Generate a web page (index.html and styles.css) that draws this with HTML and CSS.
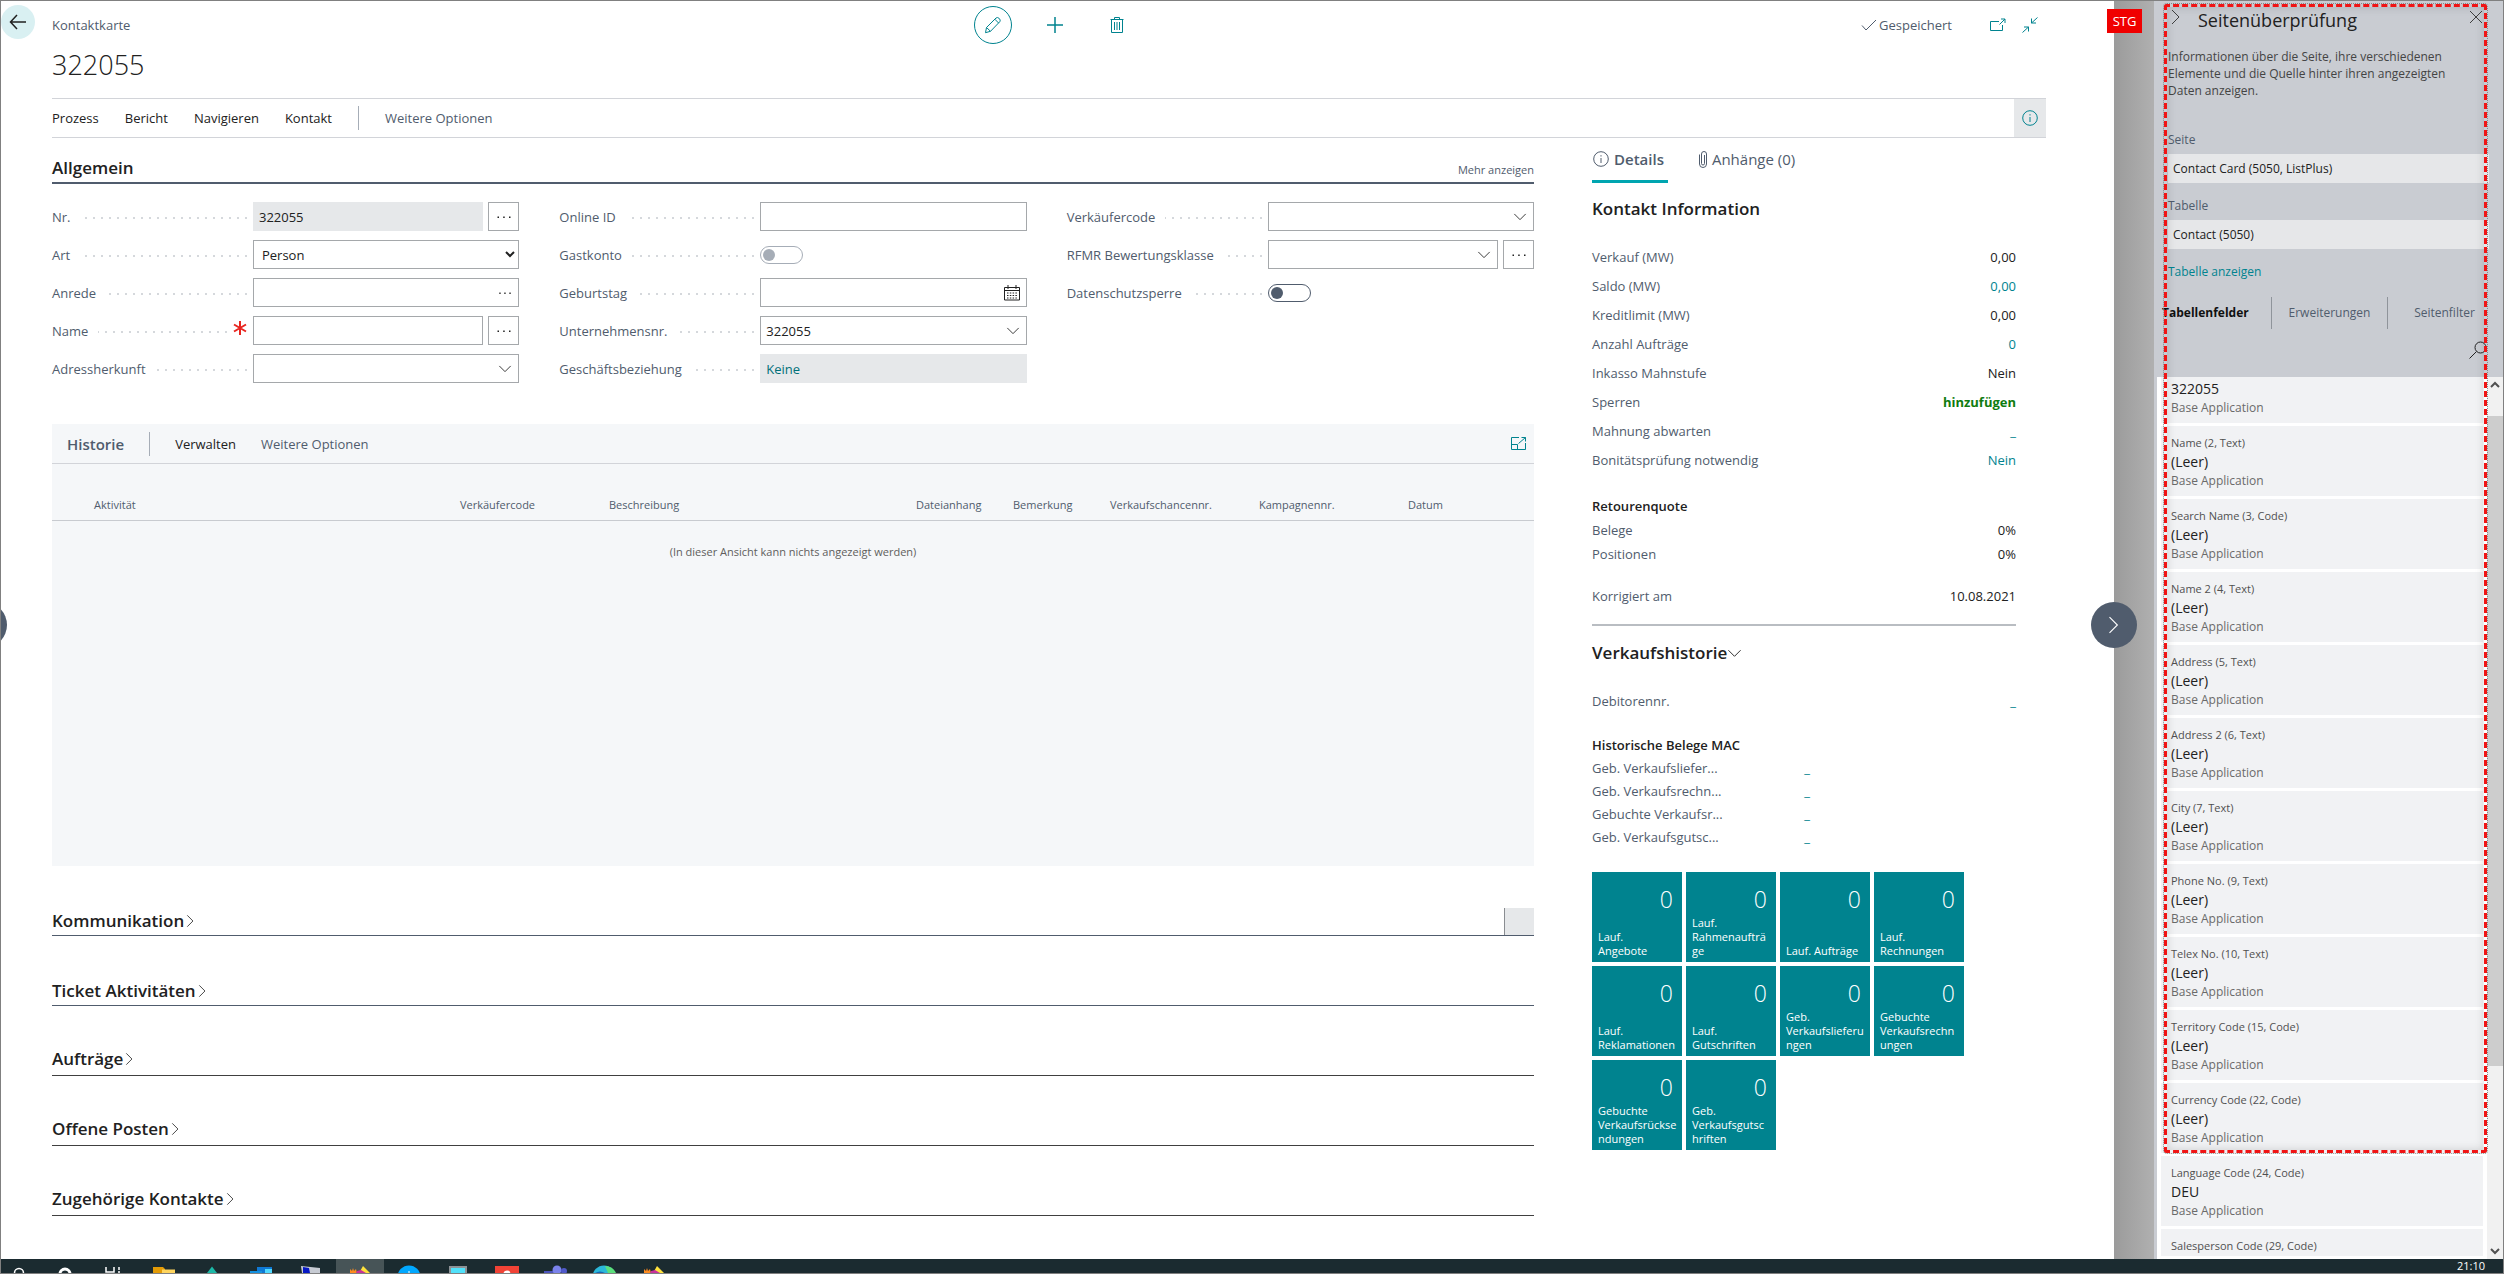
FILE: index.html
```html
<!DOCTYPE html>
<html lang="de">
<head>
  <meta charset="UTF-8" />
  <meta name="viewport" content="width=device-width, initial-scale=1.0"/>
  <title>Kontaktkarte - 322055</title>
  <link rel="stylesheet" href="styles.css">
</head>
<body>
  <svg class="sprite" aria-hidden="true">
    <symbol id="i-down" viewBox="0 0 16 16"><path d="M1.500 4.500 8 11l6.500-6.500"/></symbol>
    <symbol id="i-right" viewBox="0 0 16 16"><path d="M4 1l7 7-7 7"/></symbol>
    <symbol id="i-dots" viewBox="0 0 16 16"><path d="M1.500 7.500h1.500v1.500H1.500zM7.200 7.500h1.500v1.500H7.200zM13 7.500h1.500v1.500H13z" fill="currentColor" stroke="none"/></symbol>
    <symbol id="i-info" viewBox="0 0 16 16"><circle cx="8" cy="8" r="7.300"/><path d="M8 7v5M8 4.200v1.300"/></symbol>
  </svg>

  <div class="workspace">
    <div class="rail">
      <button class="back" aria-label="Zurück">
        <svg width="18" height="18" viewBox="0 0 18 18"><path d="M17 9H1.500M8 2 1.500 9 8 16" stroke-width="1.500"/></svg>
      </button>
      <button class="nav-circle nav-prev" aria-label="Vorheriger"></button>
    </div>

    <main class="page">
      <header class="topbar">
        <span class="caption">Kontaktkarte</span>
        <div class="tools">
          <button class="tool round" aria-label="Bearbeiten">
            <svg width="18" height="18" viewBox="0 0 18 18"><path d="M2.500 11.500 12 2q1.500-1.200 3.300.5 1.600 1.700.5 3.200L6.500 15.300 1.500 16.700zM10.800 3.200l3.900 3.900M2.500 11.500l4 3.800"/></svg>
          </button>
          <button class="tool" aria-label="Neu">
            <svg width="16" height="16" viewBox="0 0 16 16"><path d="M8 0v16M0 8h16" stroke-width="1.500"/></svg>
          </button>
          <button class="tool" aria-label="Löschen">
            <svg width="14" height="16" viewBox="0 0 14 16"><path d="M.5 2.500h13M4.500 2.500v-2h5v2M1.500 2.500v13h11v-13M4.500 5v8M7 5v8M9.500 5v8"/></svg>
          </button>
        </div>
        <div class="status">
          <svg width="16" height="12" viewBox="0 0 16 12"><path d="M1 6.500 5 11 15 1"/></svg>
          <span>Gespeichert</span>
          <button class="link-icon" aria-label="In neuem Fenster öffnen">
            <svg width="16" height="14" viewBox="0 0 16 14"><path d="M9 3.500H.5v9h12V7M9.500 6.500 15 1M11 1h4v4"/></svg>
          </button>
          <button class="link-icon" aria-label="Verkleinern">
            <svg width="16" height="16" viewBox="0 0 16 16"><path d="M15.500.5l-6 5.500M9.500 1.500V6h4.500M.5 15.500l6-5.500M2 10h4.500v4.500"/></svg>
          </button>
        </div>
      </header>
      <h1>322055</h1>

      <nav class="actionbar">
        <a href="#">Prozess</a>
        <a href="#">Bericht</a>
        <a href="#">Navigieren</a>
        <a href="#">Kontakt</a>
        <span class="divider"></span>
        <a href="#" class="muted">Weitere Optionen</a>
        <button class="info-btn" aria-label="Infobox"><svg width="16" height="16"><use href="#i-info"/></svg></button>
      </nav>

      <div class="columns">
        <div class="left">
          <div class="group-head">
            <h2>Allgemein</h2>
            <a href="#">Mehr anzeigen</a>
          </div>

          <form class="fields">
            <div class="field-col">
              <div class="field">
                <label for="nr">Nr.</label><i class="leader"></i>
                <div class="control">
                  <div class="box readonly"><input id="nr" type="text" value="322055" readonly></div>
                  <button type="button" class="assist" aria-label="Nr. auswählen"><svg width="16" height="16"><use href="#i-dots"/></svg></button>
                </div>
              </div>
              <div class="field">
                <label for="art">Art</label><i class="leader"></i>
                <div class="control">
                  <select id="art"><option>Person</option><option>Unternehmen</option></select>
                </div>
              </div>
              <div class="field">
                <label for="anrede">Anrede</label><i class="leader"></i>
                <div class="control">
                  <div class="box"><input id="anrede" type="text"><button type="button" aria-label="Anrede auswählen"><svg width="14" height="14"><use href="#i-dots"/></svg></button></div>
                </div>
              </div>
              <div class="field">
                <label for="name">Name</label><i class="leader"></i>
                <svg class="required" width="14" height="14" viewBox="0 0 14 14"><path d="M7 0v14M1 3.500l12 7M13 3.500l-12 7"/></svg>
                <div class="control">
                  <div class="box"><input id="name" type="text"></div>
                  <button type="button" class="assist" aria-label="Name bearbeiten"><svg width="16" height="16"><use href="#i-dots"/></svg></button>
                </div>
              </div>
              <div class="field">
                <label for="herkunft">Adressherkunft</label><i class="leader"></i>
                <div class="control">
                  <div class="box"><input id="herkunft" type="text"><button type="button" aria-label="Adressherkunft auswählen"><svg width="14" height="14"><use href="#i-down"/></svg></button></div>
                </div>
              </div>
            </div>

            <div class="field-col">
              <div class="field">
                <label for="online">Online ID</label><i class="leader"></i>
                <div class="control"><div class="box"><input id="online" type="text"></div></div>
              </div>
              <div class="field">
                <label for="gast">Gastkonto</label><i class="leader"></i>
                <div class="control"><input id="gast" class="toggle disabled" type="checkbox" disabled></div>
              </div>
              <div class="field">
                <label for="geb">Geburtstag</label><i class="leader"></i>
                <div class="control">
                  <div class="box"><input id="geb" type="text"><button type="button" aria-label="Kalender"><svg width="16" height="16" viewBox="0 0 16 16"><path d="M.5 2.500h15v12.500H.5zM.5 5.500h15M4 0v4M12 0v4" /><path d="M3 8h10M3 10.500h10M3 13h10" stroke-dasharray="1.500 1.300"/></svg></button></div>
                </div>
              </div>
              <div class="field">
                <label for="unr">Unternehmensnr.</label><i class="leader"></i>
                <div class="control">
                  <div class="box"><input id="unr" type="text" value="322055"><button type="button" aria-label="Unternehmen auswählen"><svg width="14" height="14"><use href="#i-down"/></svg></button></div>
                </div>
              </div>
              <div class="field">
                <label for="bez">Geschäftsbeziehung</label><i class="leader"></i>
                <div class="control"><div class="box readonly teal"><input id="bez" type="text" value="Keine" readonly></div></div>
              </div>
            </div>

            <div class="field-col">
              <div class="field">
                <label for="vk">Verkäufercode</label><i class="leader"></i>
                <div class="control">
                  <div class="box"><input id="vk" type="text"><button type="button" aria-label="Verkäufer auswählen"><svg width="14" height="14"><use href="#i-down"/></svg></button></div>
                </div>
              </div>
              <div class="field">
                <label for="rfmr">RFMR Bewertungsklasse</label><i class="leader"></i>
                <div class="control">
                  <div class="box"><input id="rfmr" type="text"><button type="button" aria-label="Klasse auswählen"><svg width="14" height="14"><use href="#i-down"/></svg></button></div>
                  <button type="button" class="assist" aria-label="Klasse bearbeiten"><svg width="16" height="16"><use href="#i-dots"/></svg></button>
                </div>
              </div>
              <div class="field">
                <label for="ds">Datenschutzsperre</label><i class="leader"></i>
                <div class="control"><input id="ds" class="toggle" type="checkbox"></div>
              </div>
            </div>
          </form>

          <section class="historie">
            <div class="part-head">
              <h3>Historie</h3>
              <span class="divider"></span>
              <a href="#">Verwalten</a>
              <a href="#" class="muted">Weitere Optionen</a>
              <button class="expand" aria-label="Fokusmodus"><svg width="15" height="13" viewBox="0 0 15 13"><path d="M8 .5H.5v12h14V6M.5 7.500h6v5M7.500 6.500l7-6M10.500.5h4v4"/></svg></button>
            </div>
            <table>
              <colgroup>
                <col><col class="c-mid"><col class="c-desc"><col class="c-small"><col class="c-small"><col class="c-mid"><col class="c-mid"><col class="c-date">
              </colgroup>
              <thead>
                <tr>
                  <th>Aktivität</th><th>Verkäufercode</th><th>Beschreibung</th><th>Dateianhang</th><th>Bemerkung</th><th>Verkaufschancennr.</th><th>Kampagnennr.</th><th>Datum</th>
                </tr>
              </thead>
              <tbody>
                <tr><td colspan="8">(In dieser Ansicht kann nichts angezeigt werden)</td></tr>
              </tbody>
            </table>
          </section>

          <div class="fasttab">
            <button>Kommunikation<svg width="13" height="16"><use href="#i-right"/></svg></button>
            <span class="summary"></span>
          </div>
          <div class="fasttab"><button>Ticket Aktivitäten<svg width="13" height="16"><use href="#i-right"/></svg></button></div>
          <div class="fasttab dark"><button>Aufträge<svg width="13" height="16"><use href="#i-right"/></svg></button></div>
          <div class="fasttab dark"><button>Offene Posten<svg width="13" height="16"><use href="#i-right"/></svg></button></div>
          <div class="fasttab dark"><button>Zugehörige Kontakte<svg width="13" height="16"><use href="#i-right"/></svg></button></div>
        </div>

        <aside class="factbox">
          <div class="tabs">
            <button class="tab active"><svg width="16" height="16"><use href="#i-info"/></svg>Details</button>
            <button class="tab"><svg width="8" height="17" viewBox="0 0 8 17"><path d="M.5 3.500v9.500a3.500 3.500 0 0 0 7 0V3a2.500 2.500 0 0 0-5 0v9.500a1.500 1.500 0 0 0 3 0V4"/></svg>Anhänge (0)</button>
          </div>

          <h2>Kontakt Information</h2>
          <dl class="facts">
            <div><dt>Verkauf (MW)</dt><dd>0,00</dd></div>
            <div><dt>Saldo (MW)</dt><dd><a href="#">0,00</a></dd></div>
            <div><dt>Kreditlimit (MW)</dt><dd>0,00</dd></div>
            <div><dt>Anzahl Aufträge</dt><dd><a href="#">0</a></dd></div>
            <div><dt>Inkasso Mahnstufe</dt><dd>Nein</dd></div>
            <div><dt>Sperren</dt><dd class="green">hinzufügen</dd></div>
            <div><dt>Mahnung abwarten</dt><dd><a href="#">_</a></dd></div>
            <div><dt>Bonitätsprüfung notwendig</dt><dd><a href="#">Nein</a></dd></div>
          </dl>
          <h4>Retourenquote</h4>
          <dl class="facts tight">
            <div><dt>Belege</dt><dd>0%</dd></div>
            <div><dt>Positionen</dt><dd>0%</dd></div>
          </dl>
          <dl class="facts tight spaced">
            <div><dt>Korrigiert am</dt><dd>10.08.2021</dd></div>
          </dl>

          <h2 class="second">Verkaufshistorie<svg width="15" height="15"><use href="#i-down"/></svg></h2>
          <dl class="facts tight debitor">
            <div><dt>Debitorennr.</dt><dd><a href="#">_</a></dd></div>
          </dl>
          <h4>Historische Belege MAC</h4>
          <dl class="facts half">
            <div><dt>Geb. Verkaufsliefer...</dt><dd><a href="#">_</a></dd></div>
            <div><dt>Geb. Verkaufsrechn...</dt><dd><a href="#">_</a></dd></div>
            <div><dt>Gebuchte Verkaufsr...</dt><dd><a href="#">_</a></dd></div>
            <div><dt>Geb. Verkaufsgutsc...</dt><dd><a href="#">_</a></dd></div>
          </dl>

          <div class="tiles">
            <a href="#" class="tile"><b>0</b><span>Lauf.<br>Angebote</span></a>
            <a href="#" class="tile"><b>0</b><span>Lauf. Rahmenaufträ<wbr>ge</span></a>
            <a href="#" class="tile"><b>0</b><span>Lauf. Aufträge</span></a>
            <a href="#" class="tile"><b>0</b><span>Lauf. Rechnungen</span></a>
            <a href="#" class="tile"><b>0</b><span>Lauf. Reklamationen</span></a>
            <a href="#" class="tile"><b>0</b><span>Lauf. Gutschriften</span></a>
            <a href="#" class="tile"><b>0</b><span>Geb. Verkaufslieferu<wbr>ngen</span></a>
            <a href="#" class="tile"><b>0</b><span>Gebuchte Verkaufsrechn<wbr>ungen</span></a>
            <a href="#" class="tile"><b>0</b><span>Gebuchte Verkaufsrückse<wbr>ndungen</span></a>
            <a href="#" class="tile"><b>0</b><span>Geb. Verkaufsgutsc<wbr>hriften</span></a>
          </div>
        </aside>
      </div>
    </main>

    <div class="backdrop">
      <span class="stage">STG</span>
      <button class="nav-circle nav-next" aria-label="Nächster"><svg width="18" height="18"><use href="#i-right"/></svg></button>
    </div>

    <aside class="inspector">
      <div class="inspector-top">
        <div class="inspector-title">
          <button aria-label="Einklappen"><svg width="16" height="16"><use href="#i-right"/></svg></button>
          <h2>Seitenüberprüfung</h2>
          <button aria-label="Schließen"><svg width="14" height="14" viewBox="0 0 14 14"><path d="M1 1l12 12M13 1 1 13"/></svg></button>
        </div>
        <p>Informationen über die Seite, ihre verschiedenen Elemente und die Quelle hinter ihren angezeigten Daten anzeigen.</p>
        <label for="seite" class="first">Seite</label>
        <input id="seite" type="text" value="Contact Card (5050, ListPlus)" readonly>
        <label for="tabelle">Tabelle</label>
        <input id="tabelle" type="text" value="Contact (5050)" readonly>
        <a href="#" class="show-table">Tabelle anzeigen</a>
      </div>
      <div class="inspector-tabs">
        <button class="active">Tabellenfelder</button>
        <button>Erweiterungen</button>
        <button>Seitenfilter</button>
      </div>
      <button class="search" aria-label="Suchen"><svg width="18" height="18" viewBox="0 0 18 18"><circle cx="11.500" cy="6.500" r="5.500"/><path d="M7.500 10.500.5 17.500"/></svg></button>

      <div class="list-wrap">
        <ul class="field-list">
          <li class="cut"><strong>322055</strong><em>Base Application</em></li>
          <li><span>Name (2, Text)</span><strong>(Leer)</strong><em>Base Application</em></li>
          <li><span>Search Name (3, Code)</span><strong>(Leer)</strong><em>Base Application</em></li>
          <li><span>Name 2 (4, Text)</span><strong>(Leer)</strong><em>Base Application</em></li>
          <li><span>Address (5, Text)</span><strong>(Leer)</strong><em>Base Application</em></li>
          <li><span>Address 2 (6, Text)</span><strong>(Leer)</strong><em>Base Application</em></li>
          <li><span>City (7, Text)</span><strong>(Leer)</strong><em>Base Application</em></li>
          <li><span>Phone No. (9, Text)</span><strong>(Leer)</strong><em>Base Application</em></li>
          <li><span>Telex No. (10, Text)</span><strong>(Leer)</strong><em>Base Application</em></li>
          <li><span>Territory Code (15, Code)</span><strong>(Leer)</strong><em>Base Application</em></li>
          <li><span>Currency Code (22, Code)</span><strong>(Leer)</strong><em>Base Application</em></li>
          <li><span>Language Code (24, Code)</span><strong>DEU</strong><em>Base Application</em></li>
          <li><span>Salesperson Code (29, Code)</span></li>
        </ul>
        <div class="scrollbar">
          <svg width="10" height="16" viewBox="0 0 10 16"><path d="M1 10l4-4 4 4" stroke-width="2"/></svg>
          <div class="thumb"></div>
          <svg width="10" height="16" viewBox="0 0 10 16"><path d="M1 6l4 4 4-4" stroke-width="2"/></svg>
        </div>
      </div>
      <div class="marker"></div>
    </aside>
  </div>

  <footer class="taskbar">
    <svg width="680" height="14" viewBox="0 0 680 14">
      <rect x="335" width="48" height="14" fill="#475457"/>
      <g fill="none" stroke="#fff" stroke-width="1.500"><circle cx="18" cy="14" r="4.500"/><circle cx="64" cy="15" r="5" stroke-width="3"/><path d="M105 8v5h8V8M118 8v3M118 12v2"/></g>
      <path d="M152 8h10l2 2v4h-12z" fill="#e39b06"/><path d="M161 10.500h13V14h-13z" fill="#ffd55e"/>
      <path d="M211 7.500l5 6.500h-10z" fill="#1cb9a7"/>
      <path d="M256 8h15v6h-15z" fill="#0f78d4"/><path d="M264 10h7v4h-7z" fill="#50d9ff"/><path d="M249 12h12v2h-12z" fill="#1490df"/>
      <path d="M300 7l19 2v5h-18z" fill="#c7cbd3"/><path d="M302 8l6 1 1 5h-7z" fill="#0718c4"/>
      <path d="M349 14v-4l2 2 1-3 1 3 2-2 1 4z" fill="#ff8b1f"/><path d="M362 7l7 7h-11z" fill="#ffe23c"/><path d="M356 12l4-1 5 3h-10z" fill="#c8329b"/>
      <circle cx="408" cy="18" r="11.500" fill="#00a8ff"/><path d="M408 12v2" stroke="#fff"/>
      <path d="M448 7h18v7h-18z" fill="#8d9296"/><path d="M450 9h14v5h-14z" fill="#51e1fa"/>
      <path d="M494 7h24v7h-24z" fill="#f14336"/><circle cx="506" cy="15" r="3.500" fill="#fff"/>
      <path d="M543 12h14v2h-14z" fill="#4b53bc"/><circle cx="556" cy="11" r="4.500" fill="#7b83eb"/><circle cx="563" cy="12" r="3" fill="#5059c9"/>
      <circle cx="603" cy="18" r="11.500" fill="#2bb8d9"/><path d="M604 7q8 0 11 7h-8z" fill="#5be07c"/><path d="M594 14q5-3 10 0z" fill="#1566b8"/>
      <path d="M643 14v-4l2 2 1-3 1 3 2-2 1 4z" fill="#ff8b1f"/><path d="M656 7l7 7h-11z" fill="#ffe23c"/><path d="M650 12l4-1 5 3h-10z" fill="#c8329b"/>
    </svg>
    <time>21:10</time>
  </footer>
</body>
</html>
```
FILE: styles.css
```css
* {
  box-sizing: border-box;
}

body {
  margin: 0;
  height: 100vh;
  display: flex;
  flex-direction: column;
  overflow: hidden;
  border: 1px solid #808080;
  font-family: "Open Sans", "Noto Sans", sans-serif;
  font-size: 13px;
  line-height: 24px;
  color: #212121;
  background: #fff;
}

h1, h2, h3, h4, p, dl, dd, ul {
  margin: 0;
  padding: 0;
}

a {
  color: inherit;
  text-decoration: none;
}

button, input, select {
  font: inherit;
  color: inherit;
  margin: 0;
}

button {
  padding: 0;
  border: none;
  background: none;
  cursor: pointer;
}

svg {
  fill: none;
  stroke: currentColor;
  flex: none;
}

.sprite {
  position: absolute;
  width: 0;
  height: 0;
}

.workspace {
  flex: 1;
  min-height: 0;
  display: flex;
}

/* left rail */
.rail {
  position: relative;
  width: 51px;
  padding-top: 4px;
}

.back {
  width: 34px;
  height: 34px;
  border-radius: 50%;
  background: #d9f0f2;
  display: flex;
  align-items: center;
  justify-content: center;
}

.nav-circle {
  position: absolute;
  top: 601px;
  width: 46px;
  height: 46px;
  border-radius: 50%;
  background: #505c6d;
  color: #fff;
  display: flex;
  align-items: center;
  justify-content: center;
}

.nav-prev {
  left: -40px;
}

.nav-next {
  left: -23px;
}

/* page */
.page {
  flex: 1;
  min-width: 0;
  padding-right: 68px;
}

.topbar {
  height: 47px;
  display: grid;
  grid-template-columns: 1fr auto 1fr;
  align-items: center;
  color: #505c6d;
}

.tools {
  display: flex;
  gap: 24px;
  padding-left: 12px;
  color: #00838f;
}

.tool {
  width: 38px;
  height: 38px;
  display: flex;
  align-items: center;
  justify-content: center;
}

.round {
  border: 1px solid #00838f;
  border-radius: 50%;
}

.status {
  display: flex;
  align-items: center;
  justify-content: flex-end;
  gap: 2px;
  padding-right: 8px;
}

.link-icon {
  display: flex;
  margin-left: 14px;
  color: #00838f;
}

.status span + .link-icon {
  margin-left: 36px;
}

h1 {
  font-size: 27px;
  font-weight: 300;
  line-height: 34px;
  margin-bottom: 16px;
}

.actionbar {
  height: 40px;
  display: flex;
  align-items: center;
  gap: 26px;
  border-top: 1px solid #d2d4d9;
  border-bottom: 1px solid #d2d4d9;
}

.divider {
  width: 1px;
  height: 24px;
  background: #a6adb7;
}

.muted {
  color: #505c6d;
}

.info-btn {
  width: 32px;
  height: 38px;
  margin-left: auto;
  background: #e6e8ea;
  color: #00838f;
  display: flex;
  align-items: center;
  justify-content: center;
}

.columns {
  display: grid;
  grid-template-columns: minmax(0, 1fr) 424px;
  gap: 58px;
  padding-right: 30px;
}

.group-head {
  height: 46px;
  padding-top: 18px;
  display: flex;
  align-items: baseline;
  justify-content: space-between;
  border-bottom: 2px solid #505c6d;
}

h2 {
  font-size: 17px;
  font-weight: 600;
}

.group-head a {
  font-size: 11px;
  color: #505c6d;
}

/* fields */
.fields {
  display: grid;
  grid-template-columns: repeat(3, 1fr);
  gap: 40px;
  margin-top: 18px;
}

.field-col {
  display: flex;
  flex-direction: column;
  gap: 9px;
}

.field {
  height: 29px;
  display: flex;
  align-items: center;
}

.field label {
  color: #505c6d;
}

.leader {
  flex: 1;
  height: 2px;
  margin: 2px 6px 0 10px;
  background: repeating-linear-gradient(to left, #d5d8dc 0, #d5d8dc 2px, transparent 2px, transparent 8px);
}

.required {
  margin-right: 6px;
  margin-bottom: 6px;
  stroke: #e8251f;
  stroke-width: 2;
}

.control {
  width: 57%;
  height: 29px;
  display: flex;
  align-items: center;
  gap: 5px;
}

.box {
  flex: 1;
  min-width: 0;
  height: 29px;
  display: flex;
  align-items: center;
  border: 1px solid #a5a8ab;
  background: #fff;
}

.box input {
  flex: 1;
  min-width: 0;
  height: 27px;
  padding: 0 5px;
  border: none;
  outline: none;
  background: none;
}

.box button {
  display: flex;
  padding: 0 6px;
}

.readonly {
  border-color: #e6e8ea;
  background: #e6e8ea;
}

.teal {
  color: #007079;
}

.assist {
  width: 31px;
  height: 29px;
  border: 1px solid #a5a8ab;
  display: flex;
  align-items: center;
  justify-content: center;
}

.control select {
  width: 100%;
  height: 29px;
  padding: 0 0 0 4px;
  border: 1px solid #a5a8ab;
  border-radius: 0;
  background: #fff;
}

.toggle {
  appearance: none;
  width: 43px;
  height: 18px;
  padding: 2px;
  border: 1px solid #505c6d;
  border-radius: 9px;
  color: #505c6d;
}

.toggle::before {
  content: "";
  display: block;
  width: 12px;
  height: 12px;
  border-radius: 50%;
  background: currentColor;
}

.disabled {
  border-color: #a6adb7;
  color: #a6adb7;
}

/* history part */
.historie {
  min-height: 442px;
  margin-top: 41px;
  background: #f5f7f9;
}

.part-head {
  height: 40px;
  padding: 0 8px 0 15px;
  display: flex;
  align-items: center;
  gap: 25px;
  border-bottom: 1px solid #d2d4d9;
}

.part-head h3 {
  font-size: 15px;
  font-weight: 600;
  color: #505c6d;
}

.expand {
  display: flex;
  margin-left: auto;
  color: #00838f;
}

.historie table {
  width: 100%;
  table-layout: fixed;
  border-collapse: collapse;
  font-size: 11px;
  line-height: 16px;
  color: #505c6d;
}

.historie th {
  padding: 33px 0 7px;
  border-bottom: 1px solid #c8cbd0;
  font-weight: 400;
  text-align: left;
  white-space: nowrap;
}

.historie th:first-child {
  padding-left: 42px;
}

.historie td {
  padding: 23px 0;
  text-align: center;
  color: #605e5c;
}

.c-mid { width: 149px; }
.c-desc { width: 307px; }
.c-small { width: 97px; }
.c-date { width: 126px; }

.fasttab {
  height: 70px;
  padding-bottom: 2px;
  display: flex;
  align-items: flex-end;
  justify-content: space-between;
  border-bottom: 1px solid #505c6d;
}

.fasttab.dark {
  padding-bottom: 4px;
  border-color: #404040;
}

.fasttab button {
  display: flex;
  align-items: center;
  font-size: 17px;
  font-weight: 600;
}

.summary {
  width: 30px;
  height: 27px;
  margin-bottom: -2px;
  border-left: 1px solid #8a8d91;
  background: #e6e8ea;
}

/* factbox */
.tabs {
  display: flex;
  gap: 30px;
  height: 45px;
}

.tab {
  display: flex;
  align-items: center;
  gap: 5px;
  padding: 0 4px 0 1px;
  border-bottom: 3px solid transparent;
  font-size: 15px;
  color: #505c6d;
}

.tab.active {
  border-color: #00a5b0;
  font-weight: 600;
}

.factbox h2 {
  margin-top: 14px;
}

.facts {
  margin-top: 22px;
  color: #212121;
}

.facts div {
  display: flex;
  justify-content: space-between;
  line-height: 29px;
}

.facts dt {
  color: #505c6d;
}

.facts a {
  color: #00838f;
}

.facts .green {
  color: #107c10;
  font-weight: 700;
}

.tight {
  margin-top: 0;
}

.tight div {
  line-height: 24px;
}

.spaced {
  margin-top: 18px;
}

.debitor {
  margin: 24px 0 20px;
}

.factbox h4 {
  margin-top: 19px;
  font-size: 13px;
  font-weight: 600;
}

.factbox .second {
  margin-top: 16px;
  padding-top: 15px;
  border-top: 2px solid #b9bdc2;
  display: flex;
  align-items: center;
}

.half {
  width: 218px;
  margin-top: 0;
}

.half div {
  line-height: 23px;
}

.tiles {
  display: grid;
  grid-template-columns: repeat(4, 90px);
  gap: 4px;
  margin-top: 23px;
}

.tile {
  height: 90px;
  padding: 12px 4px 4px 6px;
  display: flex;
  flex-direction: column;
  justify-content: space-between;
  background: #00838f;
  color: #fff;
  font-size: 11px;
  line-height: 14px;
}

.tile b {
  padding-right: 5px;
  font-size: 23px;
  font-weight: 300;
  line-height: 30px;
  text-align: right;
}

/* grey area behind the dialog */
.backdrop {
  position: relative;
  width: 40px;
  background: linear-gradient(to right, #9b9b9b, #b0b0b0);
}

.stage {
  position: absolute;
  top: 8px;
  left: -7px;
  width: 35px;
  background: #f00000;
  color: #fff;
  text-align: center;
}

/* page inspector */
.inspector {
  position: relative;
  width: 349px;
  display: flex;
  flex-direction: column;
  background: #c9ccd2;
  font-size: 12px;
  line-height: 20px;
}

.inspector-top {
  padding: 5px 14px 0;
}

.inspector-title {
  display: flex;
  align-items: center;
  padding-right: 6px;
  color: #404040;
}

.inspector-title h2 {
  flex: 1;
  margin-left: 14px;
  font-size: 18px;
  font-weight: 400;
  line-height: 28px;
  color: #212121;
}

.inspector p {
  margin: 14px 0 31px;
  padding-right: 24px;
  line-height: 17px;
  color: #444;
}

.inspector label {
  display: block;
  margin-top: 13px;
  color: #505c6d;
}

.inspector input {
  display: block;
  width: 100%;
  height: 29px;
  margin-top: 4px;
  padding: 0 5px;
  border: none;
  background: #e6e7e9;
}

.show-table {
  display: block;
  margin-top: 13px;
  color: #00838f;
}

.inspector-tabs {
  display: grid;
  grid-template-columns: 109px 116px 1fr;
  height: 32px;
  margin: 15px 2px 0 8px;
}

.inspector-tabs button {
  color: #505c6d;
}

.inspector-tabs button + button {
  border-left: 1px solid #8f949b;
}

.inspector-tabs .active {
  text-align: left;
  font-weight: 700;
  color: #111;
}

.search {
  display: flex;
  align-self: flex-end;
  margin: 12px 16px 18px;
  color: #212121;
}

.list-wrap {
  flex: 1;
  min-height: 0;
  display: flex;
  margin-left: 3px;
  background: #fff;
}

.field-list {
  flex: 1;
  margin: 0 4px 3px;
  display: flex;
  flex-direction: column;
  gap: 3px;
  overflow: hidden;
  list-style: none;
}

.field-list li {
  flex: none;
  height: 70px;
  padding: 7px 10px;
  display: flex;
  flex-direction: column;
  background: #f1f2f4;
  line-height: 19px;
}

.field-list .cut {
  height: 46px;
  padding-top: 2px;
}

.field-list span {
  font-size: 11px;
  color: #505050;
}

.field-list strong {
  font-size: 14px;
  font-weight: 400;
}

.field-list em {
  font-style: normal;
  color: #6a6a6a;
}

.scrollbar {
  width: 16px;
  display: flex;
  flex-direction: column;
  align-items: center;
  justify-content: space-between;
  background: #f1f1f1;
  color: #505050;
}

.thumb {
  width: 16px;
  height: 650px;
  margin: 23px 0 auto;
  background: #cdcdcd;
}

/* red selection frame over the inspector */
.marker {
  position: absolute;
  top: 3px;
  left: 10px;
  right: 16px;
  height: 1149px;
  border: 3px dashed #f01414;
  border-radius: 3px;
  outline: 1px dotted #888;
  box-shadow: inset 0 0 10px rgba(0, 0, 0, 0.15);
  pointer-events: none;
}

/* taskbar */
.taskbar {
  height: 14px;
  display: flex;
  justify-content: space-between;
  background: #1b2b30;
  color: #fff;
}

.taskbar svg {
  stroke: none;
}

.taskbar time {
  padding-right: 18px;
  font-size: 11px;
  line-height: 14px;
}
```
